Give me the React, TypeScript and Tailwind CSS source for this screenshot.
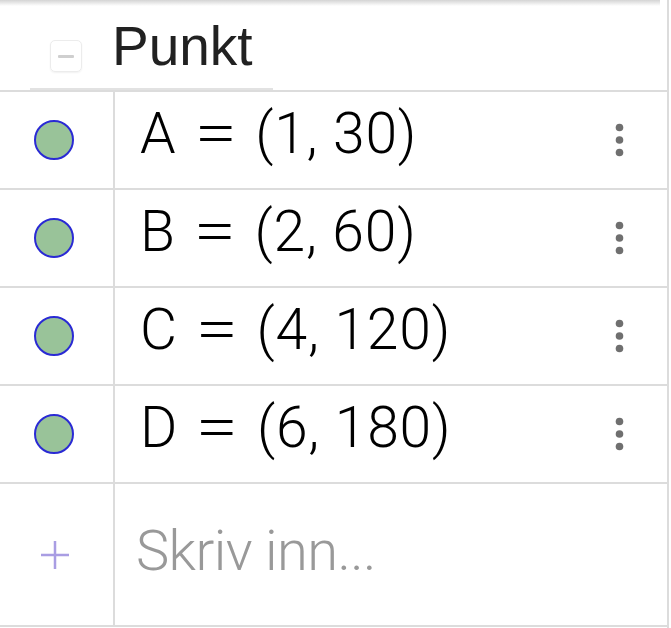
import React from "react";

const POINTS = [
  { name: "A", coords: "(1, 30)" },
  { name: "B", coords: "(2, 60)" },
  { name: "C", coords: "(4, 120)" },
  { name: "D", coords: "(6, 180)" },
];

function PointDot() {
  return (
    <svg width="42" height="42" viewBox="0 0 42 42">
      <circle cx="21" cy="21" r="19" fill="#99c399" stroke="#2a2ad4" strokeWidth="2" />
    </svg>
  );
}

function MoreDots() {
  return (
    <svg width="9" height="34" viewBox="0 0 9 34">
      <circle cx="4.5" cy="4.5" r="3.8" fill="#6f6f6f" />
      <circle cx="4.5" cy="17" r="3.8" fill="#6f6f6f" />
      <circle cx="4.5" cy="29.5" r="3.8" fill="#6f6f6f" />
    </svg>
  );
}

function PointRow({ name, coords }: { name: string; coords: string }) {
  return (
    <div className="flex h-[98px] border-t-2 border-[#dcdcdc]">
      <div className="w-[115px] shrink-0 flex items-center justify-center pr-[6px] border-r-2 border-[#dcdcdc]">
        <PointDot />
      </div>
      <div className="flex-1 flex items-center justify-between pl-[25px] pr-[43px]">
        <div className="flex items-baseline text-[57px] leading-none font-light text-black pb-[14px] font-['Roboto','Liberation_Sans',sans-serif]">
          <span>{name}</span>
          <span className="mx-[24px] inline-block scale-x-[1.35]">=</span>
          <span className="tracking-[0.8px]">{coords}</span>
        </div>
        <MoreDots />
      </div>
    </div>
  );
}

export default function App() {
  return (
    <div className="relative w-[671px] h-[628px] bg-white overflow-hidden font-['Liberation_Sans',Arial,sans-serif]">
      {/* shadow from the toolbar above */}
      <div className="absolute top-0 left-0 w-[660px] h-[6px] bg-gradient-to-b from-[#d4d4d4] to-white/0" />

      <div className="w-[669px] border-r-2 border-[#dcdcdc] h-[628px]">
        {/* Group header */}
        <div className="pl-[30px]">
          <div className="w-[243px] h-[90px] border-b-2 border-[#e2e2e2] flex items-end pb-[14px]">
            <div className="ml-[20px] mb-[2px] w-[32px] h-[32px] rounded-[5px] border border-[#ececec] shadow-[0_1px_2px_rgba(0,0,0,0.06)] flex items-center justify-center">
              <div className="w-[16px] h-[3px] bg-[#cfcfcf] rounded-[1px]" />
            </div>
            <span className="ml-[30px] text-[55px] leading-none text-[#212121]">Punkt</span>
          </div>
        </div>

        {POINTS.map((p) => (
          <PointRow key={p.name} name={p.name} coords={p.coords} />
        ))}

        {/* Input row */}
        <div className="flex h-[145px] border-y-2 border-[#dcdcdc]">
          <div className="w-[115px] shrink-0 flex items-center justify-center pr-[4px] border-r-2 border-[#dcdcdc]">
            <svg width="30" height="30" viewBox="0 0 30 30">
              <path d="M15 1V29M1 15H29" stroke="#a99de3" strokeWidth="2.5" />
            </svg>
          </div>
          <div className="flex-1 flex items-center pl-[21px] pb-[8px]">
            <span className="text-[56px] leading-none font-light tracking-[-0.6px] text-[#999999] font-['Roboto','Liberation_Sans',sans-serif]">Skriv inn...</span>
          </div>
        </div>
      </div>
    </div>
  );
}
